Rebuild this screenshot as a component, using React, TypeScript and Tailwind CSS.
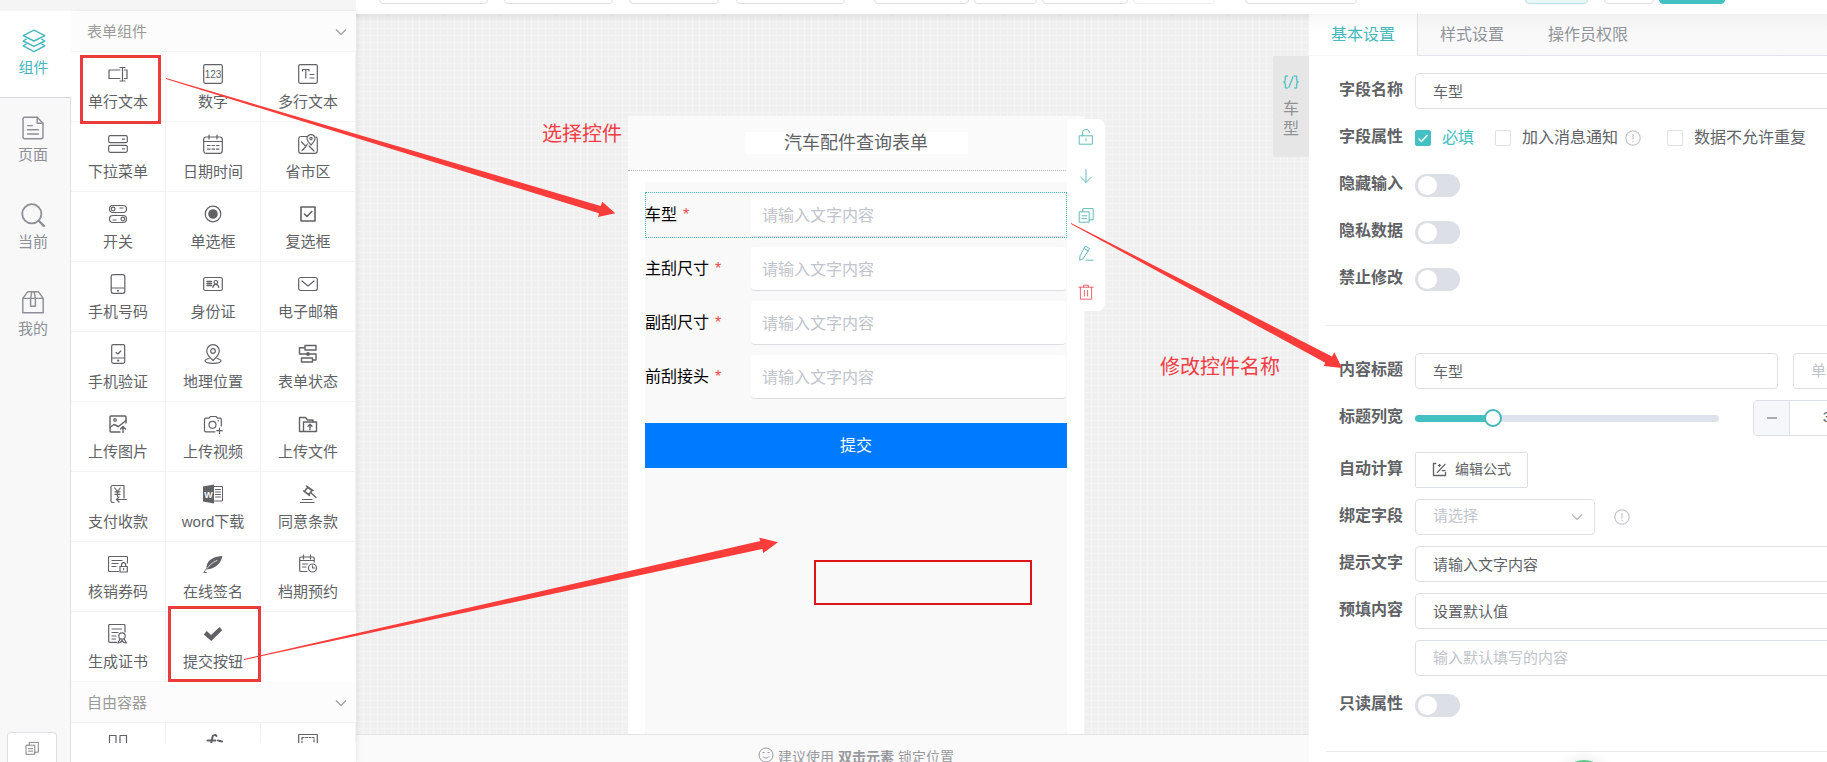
import React, { useState } from 'react';
import clsx from 'clsx';

type IconProps = { className?: string; children: React.ReactNode };

const Svg: React.FC<IconProps> = ({ className = 'w-5 h-5', children }) => (
  <svg
    viewBox="0 0 20 20"
    className={className}
    fill="none"
    stroke="currentColor"
    strokeWidth="1.2"
    strokeLinecap="round"
    strokeLinejoin="round"
    aria-hidden="true"
  >
    {children}
  </svg>
);

const ChevronDown: React.FC<{ className?: string }> = ({ className }) => (
  <svg viewBox="0 0 12 8" className={clsx('w-3 h-2', className)} fill="none" stroke="currentColor" strokeWidth="1.2" aria-hidden="true">
    <path d="M1 1.500 6 6.500 11 1.500" />
  </svg>
);

const InfoIcon = () => (
  <svg viewBox="0 0 16 16" className="w-4 h-4 text-[#c4c6cb]" fill="none" stroke="currentColor" strokeWidth="1.2" aria-hidden="true">
    <circle cx="8" cy="8" r="7.200" />
    <path d="M8 4v5.500M8 10.800v1.400" />
  </svg>
);

const CopyIcon: React.FC<{ className?: string }> = ({ className }) => (
  <Svg className={className}>
    <path d="M2 6h12v13H2zM6 6V2h13v14h-5M5 11h6M5 14.500h6" />
  </Svg>
);

/* ================= palette ================= */

const PALETTE: { label: string; icon: React.ReactNode }[] = [
  {
    label: '单行文本',
    icon: <><path d="M12 6H1v8.500h11M16.500 6H19v8.500h-2.500" /><path d="M12 3.500h5M12 17h5M14.500 3.500V17" /></>,
  },
  {
    label: '数字',
    icon: (
      <>
        <rect x="0.700" y="0.700" width="18.600" height="18.600" rx="1.500" />
        <text x="10" y="14" textAnchor="middle" fontSize="10" fill="currentColor" stroke="none" fontFamily="Liberation Sans, sans-serif">123</text>
      </>
    ),
  },
  {
    label: '多行文本',
    icon: <><rect x="0.700" y="0.700" width="18.600" height="18.600" rx="1.500" /><path d="M4.500 7V5.500H11V7M7.800 5.500V14M12 10.500h4M12 14h4" /></>,
  },
  {
    label: '下拉菜单',
    icon: <><rect x="0.700" y="1.700" width="18.600" height="7" rx="1.500" /><rect x="0.700" y="11.300" width="18.600" height="7" rx="1.500" /><path d="M14.500 5.200h2M14.500 14.800h2" /></>,
  },
  {
    label: '日期时间',
    icon: <><rect x="0.700" y="3" width="18.600" height="16.300" rx="2.500" /><path d="M1 7.500h18M6 1v4M14 1v4M4.500 11.500h2.500M9 11.500h2.500M13.500 11.500H16M4.500 15.200h2.500M9 15.200h2.500M13.500 15.200H16" /></>,
  },
  {
    label: '省市区',
    icon: (
      <>
        <path d="M9 2.500H3A2.300 2.300 0 0 0 .700 4.800V17A2.300 2.300 0 0 0 3 19.300h14a2.300 2.300 0 0 0 2.300-2.300V5.500c0-1-.300-1.800-1.300-2.500" />
        <path d="M13 .600a4 4 0 0 1 4 4c0 2.400-4 6.400-4 6.400S9 7 9 4.600a4 4 0 0 1 4-4Z" />
        <circle cx="13" cy="4.600" r="1.200" />
        <path d="M3.500 8 8 12.500l-4 4M9.500 10 5.500 15.500M11 12l5 5" />
      </>
    ),
  },
  {
    label: '开关',
    icon: <><rect x="1.500" y="1.500" width="17" height="7" rx="3.500" /><circle cx="5.200" cy="5" r="1.800" /><path d="M12 4h3" /><rect x="1.500" y="11.500" width="17" height="7" rx="3.500" /><circle cx="14.800" cy="15" r="1.800" /><path d="M5 16h3" /></>,
  },
  {
    label: '单选框',
    icon: <><circle cx="10" cy="10" r="7.800" /><circle cx="10" cy="10" r="4.800" fill="currentColor" stroke="none" /></>,
  },
  { label: '复选框', icon: <><path d="M3 3h14v14H3z" strokeWidth="1.600" /><path d="m6.500 10 2.500 2.500 4.800-5" strokeWidth="1.600" /></> },
  {
    label: '手机号码',
    icon: <><rect x="3.200" y="0.700" width="13.600" height="18.600" rx="2" /><path d="M3.500 14h13" /><circle cx="10" cy="16.700" r="1" fill="currentColor" stroke="none" /></>,
  },
  {
    label: '身份证',
    icon: <><rect x="0.700" y="3.500" width="18.600" height="13" rx="1.500" /><path d="M4 7.500h4.500M4 9.500h4.500M4 11.500h4.500" strokeWidth="1.500" /><circle cx="12.800" cy="8.300" r="1.800" /><path d="M9.800 13.500c.300-2 1.300-3.200 3-3.200s2.700 1.200 3 3.200" /></>,
  },
  { label: '电子邮箱', icon: <><rect x="0.700" y="3.500" width="18.600" height="13" rx="2" /><path d="m4 7 6 5 6-5" /></> },
  {
    label: '手机验证',
    icon: <><rect x="3.700" y="0.700" width="13" height="18.600" rx="1.500" /><path d="M4 14h12.500M8 8.500l2 1.500 2.800-3" /><circle cx="10.200" cy="16.600" r="1.100" fill="currentColor" stroke="none" /></>,
  },
  {
    label: '地理位置',
    icon: <><path d="M10 .700a6.300 6.300 0 0 1 6.300 6.300c0 3.800-6.300 9.500-6.300 9.500S3.700 10.800 3.700 7A6.300 6.300 0 0 1 10 .700Z" /><circle cx="10" cy="7" r="2.300" /><path d="M6 14.500c-2.500.500-4 1.200-4 2.300 0 1.500 3.600 2.500 8 2.500s8-1 8-2.500c0-1.100-1.500-1.800-4-2.300" /></>,
  },
  {
    label: '表单状态',
    icon: <><path d="M7 1.500h11v4.500H7zM3.500 14h11v4H3.500zM7 3.700H1.500V10H18v6h-3.500" strokeWidth="1.400" /><circle cx="10" cy="10" r="1.900" fill="currentColor" stroke="none" /></>,
  },
  {
    label: '上传图片',
    icon: <><path d="M18 9V3a1 1 0 0 0-1-1H3a1 1 0 0 0-1 1v14a1 1 0 0 0 1 1h9" strokeWidth="1.400" /><circle cx="7" cy="6" r="1.300" /><path d="m2.500 13 3.500-2.500 4.500 2L18 6.500M15 18.500v-6M12.500 15l2.500-2.500 2.500 2.500" strokeWidth="1.400" /></>,
  },
  {
    label: '上传视频',
    icon: <><path d="M18.300 12V5.500a1.300 1.300 0 0 0-1.300-1.300h-2.500L13 2.500H7.500L6 4.200H2.800a1.300 1.300 0 0 0-1.300 1.300v11a1.300 1.300 0 0 0 1.300 1.300H12" /><circle cx="9.500" cy="10.800" r="3.500" /><path d="M15 6.800h.500M16.500 14v5.500M13.800 16.700h5.500" /></>,
  },
  {
    label: '上传文件',
    icon: <><path d="M5 17.500H1.500v-14h6l2 2.500H15v2" strokeWidth="1.400" /><path d="M5.500 17.500V8h13v9.500zM12 15.500v-5M10 12.300l2-2 2 2" strokeWidth="1.400" /></>,
  },
  {
    label: '支付收款',
    icon: <><path d="M16 10V1.500H4.500A1.500 1.500 0 0 0 3 3v14a1.500 1.500 0 0 0 1.500 1.500H6M16 10v4" /><path d="M6.800 4 9.500 7.500 12.200 4M7 7.800h5M7 10.300h5M9.500 7.500v5M18.500 15.500h-10M11 13l-2.500 2.500L11 18" /></>,
  },
  {
    label: 'word下载',
    icon: (
      <>
        <path d="M0 2.500 11 .500v19L0 17.500Z" fill="currentColor" stroke="none" />
        <path d="M11 2.500h8.500v14.500H11M12.500 5.500h5M12.500 8h5M12.500 10.500h5M12.500 13h5" strokeWidth="1" />
        <text x="5.500" y="13.500" textAnchor="middle" fontSize="9" fontWeight="bold" fill="#fff" stroke="none" fontFamily="Liberation Sans, sans-serif">W</text>
      </>
    ),
  },
  {
    label: '同意条款',
    icon: <><path d="m9.500 3.500-3 4 4.500 3 3-4ZM8.500 2l6.500 4.500M5.500 7l6 4.500" strokeWidth="1.500" /><path d="m12.500 8.500 5.500 5M4.500 15.500H14M2.500 18.500h13.500" /></>,
  },
  {
    label: '核销券码',
    icon: <><path d="M10.500 17.500H1.500a1 1 0 0 1-1-1v-13a1 1 0 0 1 1-1h17a1 1 0 0 1 1 1V9M4 6.500h10M4 9.500h6M4 12.500h4" /><rect x="12" y="12.500" width="7.300" height="5.500" /><path d="M13.500 12.500v-1.800a2.100 2.100 0 0 1 4.200 0v1.800M15.600 14.700v1" /></>,
  },
  {
    label: '在线签名',
    icon: <><path d="M19.500 2C12 2.500 4.500 5 3.500 12.500c0 1.500.300 2.500 0 3.200C8 15 17 13 19.500 2Z" fill="currentColor" stroke="none" /><path d="M1.500 18.500C5 12 9 8.500 14 6.500" stroke="#fff" strokeWidth="0.800" /><path d="M1 18.500c.800-1.800 2-3.300 3-4.500M1 18.500h2.500" strokeWidth="0.900" /></>,
  },
  {
    label: '档期预约',
    icon: <><path d="M9 17.500H3A1.300 1.300 0 0 1 1.700 16.200V4.300A1.300 1.300 0 0 1 3 3h12a1.300 1.300 0 0 1 1.300 1.300V8M2 6.500h14M5.500 1v4M12.500 1v4M4.500 10h5M4.500 13h3.500" /><circle cx="14.500" cy="14" r="4" /><path d="M14.500 11.800V14h2" /></>,
  },
  {
    label: '生成证书',
    icon: <><path d="M17 8V1.500a1 1 0 0 0-1-1H1.700a1 1 0 0 0-1 1v15.800a1 1 0 0 0 1 1H9M4 5h9.500M4 8.500h6M4 12h4M4 15h3.500" /><circle cx="14" cy="12" r="3.200" /><path d="m12 14.800-2 4.200 2.300-.500L14 16.500l1.700 2 2.800.500-2.500-4.200" /></>,
  },
  { label: '提交按钮', icon: <path d="M.800 10.500 3.800 7l4.200 4 8.500-8 2.700 3.200L8.300 17Z" fill="currentColor" stroke="none" /> },
];

const CONTAINER_ICONS: { label: string; icon: React.ReactNode }[] = [
  { label: '分栏', icon: <path d="M1.500 4.500h6.500V18H1.500zM12 4.500h6.500V18H12z" /> },
  { label: '函数', icon: <path d="M13.500 5c-1-1.500-3.500-1.200-4 1L7 18M4.500 9.500h8M15 9.500l4 1" strokeWidth="2" /> },
  { label: '容器', icon: <><path d="M.700 3.500h18.600V19H.700z" /><path d="M4 6.500h12v10H4z" strokeDasharray="2 1.500" /></> },
];

const CategoryBar: React.FC<{ title: string }> = ({ title }) => (
  <button type="button" className="w-full flex items-center justify-between bg-[#fcfcfc] border-b border-[#f2f2f2] h-[41px] pt-[2px] pl-4 pr-[9px] text-[15px] text-[#9a9a9a] shrink-0">
    {title}
    <ChevronDown />
  </button>
);

const Palette = () => (
  <aside className="w-[285px] shrink-0 bg-white flex flex-col pb-[19px] overflow-hidden shadow-[2px_0_4px_#0000000f] z-10">
    <CategoryBar title="表单组件" />
    <div className="grid grid-cols-3 auto-rows-[70px] shrink-0">
      {PALETTE.map((item) => (
        <button
          key={item.label}
          type="button"
          className="flex flex-col items-center pt-3 border-b border-r border-[#f3f3f3] text-[#606266]"
        >
          <Svg>{item.icon}</Svg>
          <span className="mt-[7px] text-[15px] leading-[22px]">{item.label}</span>
        </button>
      ))}
    </div>
    <CategoryBar title="自由容器" />
    <div className="grid grid-cols-3 flex-1 min-h-0 overflow-hidden">
      {CONTAINER_ICONS.map((item) => (
        <button key={item.label} type="button" aria-label={item.label} className="flex justify-center pt-2 h-[70px] border-r border-[#f3f3f3] text-[#606266]">
          <Svg>{item.icon}</Svg>
        </button>
      ))}
    </div>
  </aside>
);

/* ================= left navigation ================= */

const NAV = [
  {
    label: '组件',
    icon: <><path d="M10 1 19 5.500 10 10 1 5.500Z" /><path d="M3.500 8.500 1 10l9 4.500 9-4.500-2.500-1.500" /><path d="M3.500 12.500 1 14l9 4.800 9-4.800-2.500-1.500" /></>,
  },
  {
    label: '页面',
    icon: <><path d="M13.500 1H3a1.300 1.300 0 0 0-1.300 1.300v15.400A1.300 1.300 0 0 0 3 19h14a1.300 1.300 0 0 0 1.300-1.300V6Z" /><path d="M13.500 1v5h4.800M5.500 8h4M5.500 11.500h9M5.500 15h9" /></>,
  },
  { label: '当前', icon: <g strokeWidth="1.500"><circle cx="9" cy="9" r="8" /><path d="m15 15 4 4" strokeWidth="2" /></g> },
  { label: '我的', icon: <><path d="M1.500 7v12h17V7L14.500 1.500h-9ZM1.500 7h17M8 7l1-5.500M12 7l-1-5.500M8 7v6.500h4V7" /></> },
];

const SideNav = () => (
  <nav className="w-[71px] shrink-0 bg-[#f8f8f9] border-r border-[#dcdfe4] flex flex-col text-[15px]">
    {NAV.map((item, idx) => (
      <button
        key={item.label}
        type="button"
        className={clsx(
          'h-[87px] pt-[18px] pr-1 flex flex-col items-center',
          idx === 0 ? 'bg-white -mr-px border-b border-[#d4d7de] text-[#45b8bb]' : 'text-[#8c8f96]',
        )}
      >
        <Svg className="w-6 h-6">{item.icon}</Svg>
        <span className="mt-1 leading-[22px]">{item.label}</span>
      </button>
    ))}
    <button type="button" aria-label="复制" className="mt-auto ml-[7px] mr-[13px] h-[30px] bg-white border border-b-0 border-[#dcdfe6] rounded-t-sm flex items-center justify-center text-[#6b6e75]">
      <CopyIcon className="w-[14px] h-[14px]" />
    </button>
  </nav>
);

/* ================= top bar ================= */

const TOP_BUTTONS = [
  { name: '撤销', style: 'ml-[23px] w-[109px] border-[#dcdfe6]' },
  { name: '恢复', style: 'ml-[16px] w-[109px] border-[#dcdfe6]' },
  { name: '清空', style: 'ml-[16px] w-[90px] border-[#dcdfe6]' },
  { name: '导入', style: 'ml-[17px] w-[109px] border-[#dcdfe6]' },
  { name: '导出', style: 'ml-[29px] w-[95px] border-[#dcdfe6]' },
  { name: '左对齐', style: 'ml-[5px] w-[63px] border-[#dcdfe6]' },
  { name: '居中', style: 'ml-[5px] w-[86px] border-[#dcdfe6]' },
  { name: '右对齐', style: 'ml-[5px] w-[82px] border-[#eeeff2]' },
  { name: '设置', style: 'ml-[30px] w-[112px] border-[#dcdfe6]' },
  { name: '预览', style: 'ml-auto w-[63px] bg-[#e8f8f8] border-[#bfe0e2]' },
  { name: '返回', style: 'ml-[16px] w-[50px] border-[#dcdfe6]' },
  { name: '保存', style: 'ml-[5px] mr-[102px] w-[66px] bg-[#44c0c3] border-[#44c0c3]' },
];

const TopBar = () => (
  <header className="flex h-[14px] shrink-0 overflow-hidden bg-white">
    <div className="w-[356px] shrink-0 h-[11px] bg-[#f5f5f5]" />
    <div className="flex-1 flex items-end h-1">
      {TOP_BUTTONS.map((btn) => (
        <button key={btn.name} type="button" aria-label={btn.name} className={clsx('h-8 border rounded shrink-0', btn.style)} />
      ))}
    </div>
  </header>
);

/* ================= canvas ================= */

const FIELDS = ['车型', '主刮尺寸', '副刮尺寸', '前刮接头'];

const Canvas = () => (
  <main className="flex-1 min-w-0 flex flex-col relative">
    <div className="flex-1 min-h-0 flex justify-center pl-[47px] pt-[102px] bg-[#f0f0f0] bg-[linear-gradient(#f5f5f5_1px,transparent_1px),linear-gradient(90deg,#f5f5f5_1px,transparent_1px)] bg-size-[7px_7px] shadow-[inset_0_8px_8px_-6px_#0000001a]">
      <div className="relative w-[456px] bg-white flex flex-col">
        <div className="h-[55px] bg-[#fafafa] border-b border-dotted border-[#b5b8bd] flex justify-center items-center">
          <h1 className="bg-white w-[223px] h-[22px] leading-[22px] text-center text-[18px] text-[#606266]">汽车配件查询表单</h1>
        </div>
        <form className="flex-1 mt-[11px] mx-[17px] pt-[10px] bg-[#f9f9f9]" onSubmit={(e) => e.preventDefault()}>
          {FIELDS.map((name, idx) => (
            <div
              key={name}
              className={clsx('flex h-[46px] mb-2 border border-dotted', idx === 0 ? 'border-[#45b8bb]' : 'border-transparent')}
            >
              <label htmlFor={`field-${idx}`} className="-ml-px w-[106px] shrink-0 leading-[44px] text-[16px] text-black">
                {name}
                <span className="ml-[6px] text-[#f04848]">*</span>
              </label>
              <input
                id={`field-${idx}`}
                type="text"
                placeholder="请输入文字内容"
                className="flex-1 min-w-0 bg-white border-b border-[#dcdee2] rounded-sm px-[11px] pt-[2px] text-[16px] placeholder:text-[#c0c4cc] outline-none"
              />
            </div>
          ))}
          <button type="submit" className="mt-[23px] block w-full h-[45px] bg-[#007aff] text-white text-[16px]">
            提交
          </button>
        </form>

        {/* actions of the selected field */}
        <div className="absolute left-[439px] top-[3px] w-[38px] h-[192px] bg-white rounded-r-lg flex flex-col items-center justify-between pt-[10px] pb-[11px] text-[#5cb8ba]">
          <button type="button" aria-label="锁定">
            <Svg className="w-4 h-4"><path d="M2 8.500h16V19H2zM5.500 8.500V5a4.300 4.300 0 0 1 8.600-.500M10 12v3" /></Svg>
          </button>
          <button type="button" aria-label="下移">
            <Svg className="w-4 h-4"><path d="M10 2v16M3.500 11.500 10 18l6.500-6.500" /></Svg>
          </button>
          <button type="button" aria-label="复制字段">
            <CopyIcon className="w-4 h-4" />
          </button>
          <button type="button" aria-label="编辑">
            <Svg className="w-4 h-4"><path d="m9.500 1.500 5 3L6.500 17 2 19l.500-5ZM8 4.500l5 3M10 19h9" /></Svg>
          </button>
          <button type="button" aria-label="删除" className="text-[#ea5f68]">
            <Svg className="w-4 h-4"><path d="M1 4h18M3 4v15h14V4M7 4V1.500h6V4M8 8v7M12 8v7" /></Svg>
          </button>
        </div>
      </div>
    </div>

    <div className="absolute right-0 top-[42px] w-9 h-[101px] bg-[#e6e6e6] flex flex-col items-center pt-[18px] text-[16px] leading-[20px] text-[#8f9297]">
      <Svg className="w-4 h-4 mb-[9px] text-[#5cc4c6]">
        <path d="M5.500 2.500H4C2.500 2.500 3 4 3 6.500S2.500 9.500 1 10c1.500.500 2 1 2 3.500s-.500 4 1 4h1.500M14.500 2.500H16c1.500 0 1 1.500 1 4s.500 3 2 3.500c-1.500.500-2 1-2 3.500s.500 4-1 4h-1.500M12.500 3.500l-5 13" strokeWidth="1.800" />
      </Svg>
      <span>车</span>
      <span>型</span>
    </div>

    <footer className="h-7 shrink-0 overflow-hidden bg-[#fafafa] border-t border-[#e4e4e4] pl-[47px] pt-[12px] flex justify-center items-start gap-1 text-[14px] leading-[20px] text-[#97999e]">
      <svg viewBox="0 0 16 16" className="w-4 h-4 shrink-0" fill="none" stroke="currentColor" aria-hidden="true">
        <circle cx="8" cy="8" r="7" />
        <path d="M4.500 5.500h2M9.500 5.500h2M5 9.500c1 2 5 2 6 0" />
      </svg>
      <p className="whitespace-nowrap">建议使用 <b>双击元素</b> 锁定位置</p>
    </footer>
  </main>
);

/* ================= settings ================= */

const TEXT_BOX =
  'h-9 bg-white border border-[#dcdfe6] rounded px-[17px] pb-[2px] text-[15px] text-[#606266] placeholder:text-[#c0c4cc] outline-none';

const Row: React.FC<{ label?: string; htmlFor?: string; children: React.ReactNode }> = ({ label, htmlFor, children }) => (
  <div className="flex items-center h-9">
    <label htmlFor={htmlFor} className="w-[76px] shrink-0 pb-[2px] text-[16px] font-bold text-[#606266]">
      {label}
    </label>
    {children}
  </div>
);

const Toggle: React.FC<{ id: string }> = ({ id }) => (
  <input
    id={id}
    type="checkbox"
    role="switch"
    className="appearance-none w-[45px] h-[23px] rounded-full bg-[#dcdfe6] checked:bg-[#44c0c3] relative before:absolute before:left-[3px] before:top-[2px] before:w-[19px] before:h-[19px] before:rounded-full before:bg-white checked:before:left-[23px]"
  />
);

const CheckBox: React.FC<{ label: string; checked?: boolean }> = ({ label, checked }) => (
  <label className="flex items-center gap-[11px] text-[16px] leading-[22px] text-[#606266] has-checked:text-[#44c0c3] whitespace-nowrap">
    <span className="relative w-4 h-4">
      <input type="checkbox" defaultChecked={checked} className="peer appearance-none block w-4 h-4 bg-white border border-[#dcdfe6] rounded-xs checked:bg-[#44c0c3] checked:border-[#44c0c3]" />
      <svg viewBox="0 0 16 16" className="absolute inset-0 w-4 h-4 hidden peer-checked:block pointer-events-none" fill="none" stroke="#fff" strokeWidth="1.3" aria-hidden="true">
        <path d="m3.500 8.500 3 3 6-6.500" />
      </svg>
    </span>
    {label}
  </label>
);

const TABS = ['基本设置', '样式设置', '操作员权限'];

const Settings = () => {
  const [width, setWidth] = useState(30);
  const max = 125;
  const fill = 9 + (304 - 18) * (width / max);

  return (
    <aside className="relative w-[518px] shrink-0 bg-white overflow-hidden">
      <div className="flex h-[42px] bg-linear-to-b from-[#f1f1f1] to-[#f9f9f9] to-40% text-[16px] text-[#909399]">
        {TABS.map((tab, idx) => (
          <button
            key={tab}
            type="button"
            className={clsx(
              'px-[22px] border-b whitespace-nowrap',
              idx === 0
                ? 'bg-linear-to-b from-[#f6f6f6] to-white to-40% border-b-transparent border-r border-r-[#dcdfe6] text-[#45b8bb]'
                : 'border-[#e1e3e8]',
            )}
          >
            {tab}
          </button>
        ))}
        <div className="flex-1 border-b border-[#e1e3e8]" />
      </div>

      <div className="w-[600px] pl-[30px] pt-[17px] flex flex-col gap-[11px]">
        <Row label="字段名称" htmlFor="name">
          <input id="name" type="text" defaultValue="车型" className={clsx(TEXT_BOX, 'flex-1')} />
        </Row>
        <Row label="字段属性">
          <CheckBox label="必填" checked />
          <div className="ml-[21px] mr-[7px]"><CheckBox label="加入消息通知" /></div>
          <InfoIcon />
          <div className="ml-[26px]"><CheckBox label="数据不允许重复" /></div>
        </Row>
        <Row label="隐藏输入" htmlFor="hide"><Toggle id="hide" /></Row>
        <Row label="隐私数据" htmlFor="private"><Toggle id="private" /></Row>
        <Row label="禁止修改" htmlFor="lock"><Toggle id="lock" /></Row>
      </div>

      <hr className="mt-7 ml-[17px] border-[#e8eaee]" />

      <div className="w-[600px] pl-[30px] pt-[27px] flex flex-col gap-[11px]">
        <Row label="内容标题" htmlFor="title">
          <input id="title" type="text" defaultValue="车型" className={clsx(TEXT_BOX, 'w-[363px]')} />
          <input type="text" placeholder="单位" aria-label="单位" className={clsx(TEXT_BOX, 'ml-[15px] flex-1 min-w-0')} />
        </Row>
        <div className="mb-[5px]">
          <Row label="标题列宽" htmlFor="width">
            <input
              id="width"
              type="range"
              min={0}
              max={max}
              value={width}
              onChange={(e) => setWidth(Number(e.target.value))}
              style={{ backgroundImage: `linear-gradient(90deg, #44c0c3 ${fill}px, #dfe2ec ${fill}px)` }}
              className="appearance-none shrink-0 w-[304px] h-[7px] rounded-full [&::-webkit-slider-thumb]:appearance-none [&::-webkit-slider-thumb]:w-[18px] [&::-webkit-slider-thumb]:h-[18px] [&::-webkit-slider-thumb]:rounded-full [&::-webkit-slider-thumb]:bg-white [&::-webkit-slider-thumb]:border-2 [&::-webkit-slider-thumb]:border-[#45b8bb]"
            />
            <div className="ml-[34px] flex w-[156px] h-9 shrink-0 border border-[#dcdfe6] rounded overflow-hidden text-[#606266]">
              <button type="button" aria-label="减少" className="w-9 shrink-0 bg-[#f5f7fa] border-r border-[#dcdfe6] flex items-center justify-center" onClick={() => setWidth(Math.max(0, width - 1))}>
                <svg viewBox="0 0 10 2" className="w-[10px] h-[2px]" stroke="currentColor" aria-hidden="true"><path d="M0 1h10" /></svg>
              </button>
              <input type="text" aria-label="列宽" value={width} readOnly className="flex-1 min-w-0 pb-[2px] text-center text-[15px] outline-none" />
              <button type="button" aria-label="增加" className="w-9 shrink-0 bg-[#f5f7fa] border-l border-[#dcdfe6]" onClick={() => setWidth(Math.min(max, width + 1))}>+</button>
            </div>
          </Row>
        </div>
        <Row label="自动计算">
          <button type="button" className="h-9 w-[113px] border border-[#dcdfe6] rounded-xs flex items-center justify-center gap-2 pb-[2px] text-[14px] text-[#606266]">
            <Svg className="w-[15px] h-[15px]">
              <path d="M5 2H2v16h16v-4" strokeWidth="1.800" />
              <path d="M17.500 3 7 14M8.500 4.500h3M10 3v3M13.500 11.500h4" strokeWidth="1.500" />
            </Svg>
            编辑公式
          </button>
        </Row>
        <Row label="绑定字段" htmlFor="bind">
          <span className="relative mr-[19px]">
            <select id="bind" className={clsx(TEXT_BOX, 'appearance-none w-[180px] block text-[#c0c4cc]')}>
              <option>请选择</option>
            </select>
            <ChevronDown className="absolute right-3 top-[14px] text-[#b4b8c0] pointer-events-none" />
          </span>
          <InfoIcon />
        </Row>
        <Row label="提示文字" htmlFor="hint">
          <input id="hint" type="text" defaultValue="请输入文字内容" className={clsx(TEXT_BOX, 'flex-1')} />
        </Row>
        <Row label="预填内容" htmlFor="preset">
          <input id="preset" type="text" defaultValue="设置默认值" className={clsx(TEXT_BOX, 'flex-1')} />
        </Row>
        <Row>
          <input type="text" aria-label="默认内容" placeholder="输入默认填写的内容" className={clsx(TEXT_BOX, 'flex-1')} />
        </Row>
        <Row label="只读属性" htmlFor="readonly"><Toggle id="readonly" /></Row>
      </div>

      <hr className="mt-7 ml-[17px] border-[#e8eaee]" />

      {/* floating helper button, peeking in from below the window */}
      <button type="button" aria-label="助手" className="absolute left-[251px] -bottom-[46px] w-12 h-12 rounded-full bg-[#5cc98f] shadow-[0_0_10px_4px_#0000000f]" />
    </aside>
  );
};

/* ================= tutorial marks ================= */

const Marks = () => (
  <div className="absolute inset-0 pointer-events-none z-20 overflow-hidden">
    <svg className="absolute inset-0 w-full h-full" fill="#fa3c3a" aria-hidden="true">
      <g fill="none" stroke="#ec3b3d" strokeWidth="3">
        <rect x="81.500" y="56.500" width="78" height="66" />
        <rect x="169.500" y="607.500" width="90" height="73" />
      </g>
      <rect x="815" y="561" width="216" height="43" fill="none" stroke="#dc1618" strokeWidth="2" />
      <polygon points="166,78 600.700,206 602.300,201.700 615.300,213.300 598,217 599,213.300 166,79" />
      <polygon points="1071,223 1332,356.500 1334.300,352.300 1342,368 1323.700,366 1325.300,362.700 1071,224" />
      <polygon points="244,659 760.300,541 759.300,537.700 778,542.300 763.300,553 762.300,549 244,660" />
    </svg>
    <span className="absolute left-[542px] top-[119px] text-[20px] leading-[30px] text-[#f03c44]">选择控件</span>
    <span className="absolute left-[1160px] top-[352px] text-[20px] leading-[30px] text-[#f03c44]">修改控件名称</span>
  </div>
);

export default function App() {
  return (
    <div className="relative h-screen flex flex-col overflow-hidden bg-white font-['Liberation_Sans','Noto_Sans_CJK_SC',sans-serif]">
      <TopBar />
      <div className="flex-1 min-h-0 flex">
        <div className="flex shrink-0 -mt-[3px] relative z-10">
          <SideNav />
          <Palette />
        </div>
        <Canvas />
        <Settings />
      </div>
      <Marks />
    </div>
  );
}
